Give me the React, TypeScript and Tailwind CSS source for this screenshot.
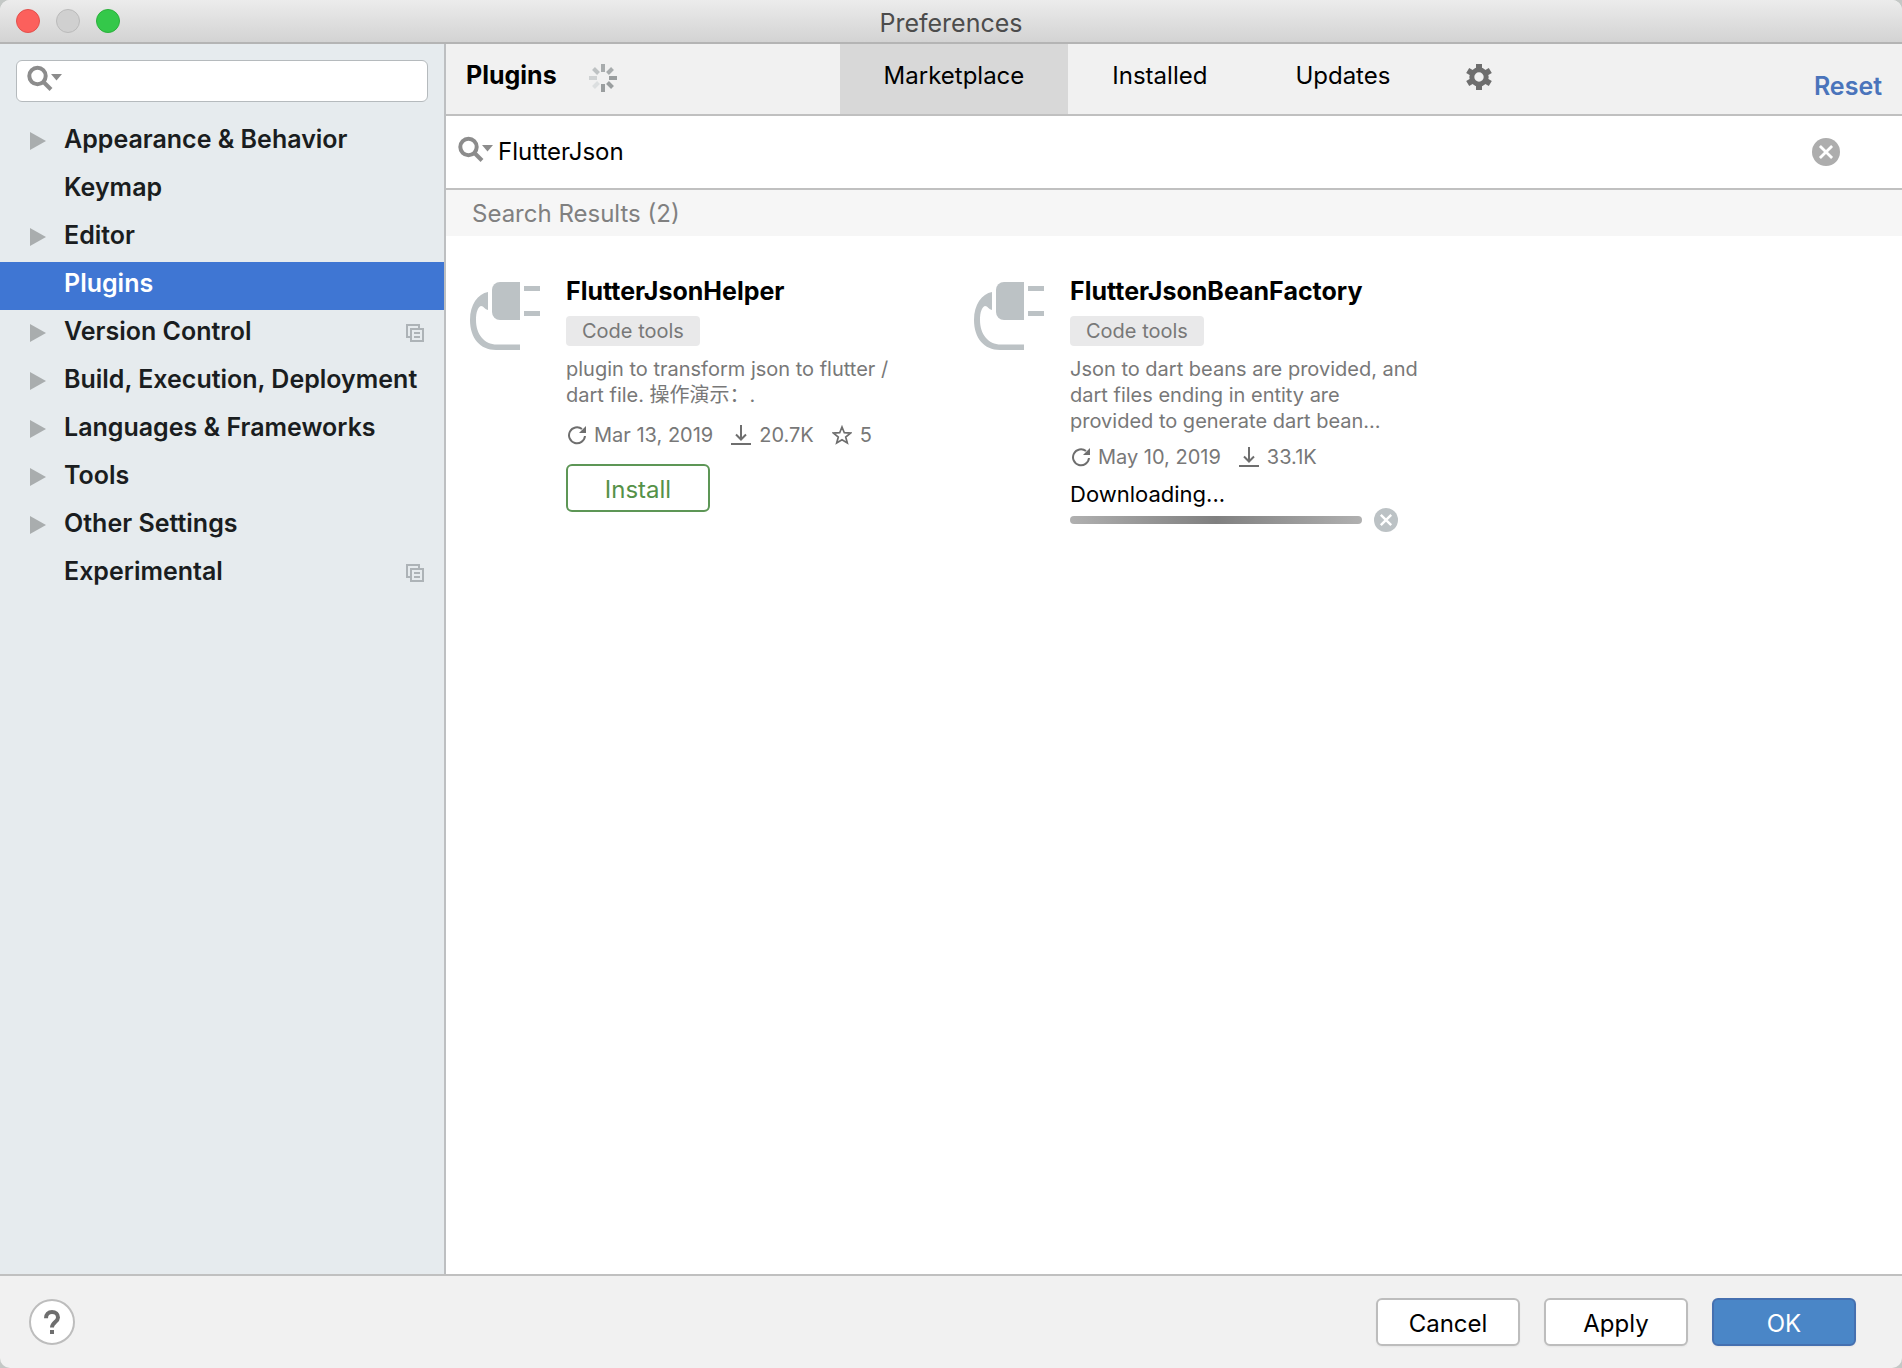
import { useState } from "react"
import type React from "react"

interface Category {
  name: string
  expandable?: boolean
  projectLevel?: boolean
}

interface Plugin {
  name: string
  tag: string
  description: string
  updated: string
  downloads: string
  rating?: string
  downloading?: boolean
}

const categories: Category[] = [
  { name: "Appearance & Behavior", expandable: true },
  { name: "Keymap" },
  { name: "Editor", expandable: true },
  { name: "Plugins" },
  { name: "Version Control", expandable: true, projectLevel: true },
  { name: "Build, Execution, Deployment", expandable: true },
  { name: "Languages & Frameworks", expandable: true },
  { name: "Tools", expandable: true },
  { name: "Other Settings", expandable: true },
  { name: "Experimental", projectLevel: true },
]

const tabs = ["Marketplace", "Installed", "Updates"]

const plugins: Plugin[] = [
  {
    name: "FlutterJsonHelper",
    tag: "Code tools",
    description: "plugin to transform json to flutter / dart file. 操作演示：.",
    updated: "Mar 13, 2019",
    downloads: "20.7K",
    rating: "5",
  },
  {
    name: "FlutterJsonBeanFactory",
    tag: "Code tools",
    description: "Json to dart beans are provided, and dart files ending in entity are provided to generate dart bean...",
    updated: "May 10, 2019",
    downloads: "33.1K",
    downloading: true,
  },
]

export default function App() {
  const [selected, setSelected] = useState("Plugins")
  const [tab, setTab] = useState("Marketplace")
  const [filter, setFilter] = useState("")
  const [query, setQuery] = useState("FlutterJson")

  return (
    <div className="min-h-screen bg-[#c4c8c6] font-['Inter','Noto_Sans_CJK_SC',sans-serif] text-2xl text-black">
      <div className="flex min-h-screen flex-col overflow-hidden rounded-[10px] bg-[#f1f1f1]">
        <header className="grid h-11 shrink-0 grid-cols-[1fr_auto_1fr] items-center border-b-2 border-[#b4b4b4] bg-linear-to-b from-[#ececec] to-[#d3d3d3] px-4">
          <div className="flex gap-4">
            <button aria-label="Close" className="size-6 rounded-full border border-[#e2504c] bg-[#fc605c]" />
            <button aria-label="Minimize" className="size-6 rounded-full border border-[#bababa] bg-[#d0d0d0]" />
            <button aria-label="Zoom" className="size-6 rounded-full border border-[#2bb03c] bg-[#34c84a]" />
          </div>
          <h1 className="pt-1 text-[25px] leading-8 text-[#4c4c4c]">Preferences</h1>
        </header>

        <div className="flex flex-1">
          <aside className="w-[446px] shrink-0 border-r-2 border-[#bdbfc1] bg-[#e6ebee]">
            <div className="px-4 pt-4 pb-4">
              <label className="flex h-[42px] items-start gap-1 rounded-md border border-[#b5babd] bg-white px-2.5 pt-1">
                <SearchIcon />
                <input
                  aria-label="Search settings"
                  value={filter}
                  onChange={(e) => setFilter(e.target.value)}
                  className="min-w-0 flex-1 bg-transparent outline-none"
                />
              </label>
            </div>
            <nav>
              {categories.map((c) => (
                <CategoryRow key={c.name} category={c} active={c.name === selected} onSelect={() => setSelected(c.name)} />
              ))}
            </nav>
          </aside>

          <main className="flex min-w-0 flex-1 flex-col bg-white">
            <div className="grid h-[72px] grid-cols-[1fr_auto_1fr] border-b-2 border-[#c0c0c0] bg-[#f1f1f1]">
              <div className="flex items-start gap-8 pt-4 pl-5">
                <h2 className="text-[25px] leading-[30px] font-bold">Plugins</h2>
                <Spinner />
              </div>
              <div className="flex">
                {tabs.map((t) => (
                  <button
                    key={t}
                    onClick={() => setTab(t)}
                    className={`flex items-start px-11 pt-4 ${t === tab ? "bg-[#d8d8d8]" : ""}`}
                  >
                    {t}
                  </button>
                ))}
                <button aria-label="Plugin settings" className="flex items-start pt-5 pr-4 pl-8">
                  <GearIcon />
                </button>
              </div>
              <div className="flex items-start justify-end pt-[26px] pr-5">
                <a href="#reset" className="text-[25px] leading-8 font-semibold text-[#4a74bb]">
                  Reset
                </a>
              </div>
            </div>

            <div className="flex h-[74px] items-center border-b-2 border-[#c0c0c0] pr-[62px] pl-3">
              <label className="flex flex-1 items-start gap-1">
                <SearchIcon />
                <input
                  aria-label="Search plugins"
                  value={query}
                  onChange={(e) => setQuery(e.target.value)}
                  className="min-w-0 flex-1 bg-transparent leading-8 outline-none"
                />
              </label>
              <button aria-label="Clear search" onClick={() => setQuery("")}>
                <CrossCircle className="size-7 text-[#adadad]" />
              </button>
            </div>

            <div className="flex h-[46px] items-center bg-[#f6f6f6] px-[26px] pt-0.5 text-[#808080]">Search Results (2)</div>

            <div className="flex flex-wrap px-6 pt-10">
              {plugins.map((p) => (
                <PluginCard key={p.name} plugin={p} />
              ))}
            </div>
          </main>
        </div>

        <footer className="flex h-[94px] shrink-0 items-center gap-6 border-t-2 border-[#c0c0c0] pr-[46px] pl-[29px]">
          <button
            aria-label="Help"
            className="mr-auto flex size-[46px] items-center justify-center rounded-full border-2 border-[#bdbdbd] bg-white"
          >
            <svg viewBox="0 0 16 24" className="h-6 w-4" fill="none" stroke="#6e6e6e" strokeWidth="4">
              <path d="M2 8.2C2 4.4 4.4 2 8 2s6 2.400 6 5.400c0 4.400-6 5-6 10.200" />
              <path d="M8 20v4" />
            </svg>
          </button>
          <DialogButton>Cancel</DialogButton>
          <DialogButton>Apply</DialogButton>
          <button className="h-12 w-36 rounded-md border-2 border-[#4570b0] bg-[#4a86c7] pt-1 text-white shadow-xs">
            OK
          </button>
        </footer>
      </div>
    </div>
  )
}

function CategoryRow({ category, active, onSelect }: { category: Category; active: boolean; onSelect: () => void }) {
  return (
    <button
      onClick={onSelect}
      className={`flex h-12 w-full items-center pr-5 pb-0.5 pl-[30px] text-left text-[25px] leading-8 font-semibold ${
        active ? "bg-[#3f76d3] text-white" : "text-[#1a1d20]"
      }`}
    >
      <span className="w-[34px] shrink-0">
        {category.expandable && (
          <svg viewBox="0 0 16 18" className="h-[18px] w-4" fill="#a9adae">
            <path d="M0 0l16 9-16 9z" />
          </svg>
        )}
      </span>
      <span className="flex-1 pb-1 whitespace-nowrap">{category.name}</span>
      {category.projectLevel && (
        <svg viewBox="0 0 18 18" className="size-[18px]" fill="none" stroke="#adb3b7" strokeWidth="2">
          <path d="M4 13H1V1h12v3M5 5h12v12H5zM8 9h6M8 13h6" />
        </svg>
      )}
    </button>
  )
}

function PluginCard({ plugin }: { plugin: Plugin }) {
  return (
    <article className="flex w-[504px] items-start gap-6 pr-13">
      <PlugIcon />
      <div className="flex min-w-0 flex-1 flex-col items-start">
        <h3 className="text-[25px] leading-[30px] font-bold">{plugin.name}</h3>
        <span className="mt-2.5 rounded-sm bg-[#e9e9ea] px-4 text-xl leading-[30px] text-[#787878]">{plugin.tag}</span>
        <p className="mt-2.5 min-h-14 text-xl leading-[26px] text-[#787878]">{plugin.description}</p>
        <div className="mt-[11px] flex items-center gap-[18px] text-xl leading-6 text-[#787878]">
          <span className="flex items-center gap-2">
            <svg viewBox="0 0 20 20" className="size-5" fill="none" stroke="#6e6e6e" strokeWidth="2">
              <path d="M19 11a8 8 0 1 1-3-7" />
              <path d="M20 1v7h-7z" fill="#6e6e6e" stroke="none" />
            </svg>
            {plugin.updated}
          </span>
          <span className="flex items-center gap-2">
            <svg viewBox="0 0 20 20" className="size-5" fill="none" stroke="#6e6e6e" strokeWidth="2">
              <path d="M10 0v14M5 9.500l5 5 5-5M0 19h20" />
            </svg>
            {plugin.downloads}
          </span>
          {plugin.rating && (
            <span className="flex items-center gap-2">
              <svg viewBox="0 0 20 20" className="size-5" fill="none" stroke="#6e6e6e" strokeWidth="1.700">
                <path d="M10 2l2.300 5.700 6.200.4-4.800 3.900 1.600 6L10 14.700 4.700 18l1.600-6-4.800-3.900 6.200-.4z" />
              </svg>
              {plugin.rating}
            </span>
          )}
        </div>
        {plugin.downloading ? (
          <>
            <p className="mt-[11px] text-[22px] leading-7">Downloading...</p>
            <div className="flex items-center gap-3">
              <div
                role="progressbar"
                aria-label="Downloading"
                className="h-2 w-[292px] rounded-full bg-linear-to-r from-[#b0b0b0] via-[#808080] to-[#b0b0b0]"
              />
              <button aria-label="Cancel download">
                <CrossCircle className="size-6 text-[#bcc2c5]" />
              </button>
            </div>
          </>
        ) : (
          <button className="mt-[17px] h-12 w-36 rounded-md border-2 border-[#5d9656] pt-1 text-[#559148]">Install</button>
        )}
      </div>
    </article>
  )
}

function DialogButton({ children }: { children: React.ReactNode }) {
  return <button className="h-12 w-36 rounded-md border-2 border-[#bdbdbd] bg-white pt-1 shadow-xs">{children}</button>
}

function SearchIcon() {
  return (
    <svg viewBox="0 0 36 26" className="h-[26px] w-9 shrink-0" fill="none">
      <circle cx="10.500" cy="11" r="8.200" stroke="#8c8c8c" strokeWidth="4" />
      <path d="M16 16.500l8 8" stroke="#8c8c8c" strokeWidth="4" />
      <path d="M24 9h11l-5.500 6.500z" fill="#8c8c8c" />
    </svg>
  )
}

function CrossCircle({ className }: { className: string }) {
  return (
    <svg viewBox="0 0 24 24" className={className}>
      <circle cx="12" cy="12" r="12" fill="currentColor" />
      <path d="M6.800 6.800l10.400 10.400M17.200 6.800L6.800 17.200" stroke="#fff" strokeWidth="2.400" />
    </svg>
  )
}

function Spinner() {
  return (
    <svg viewBox="0 0 28 28" className="mt-1 size-7" strokeWidth="4">
      <path d="M14 0v8" stroke="#a8acad" />
      <path d="M23.500 4.500l-5 5" stroke="#a8acad" />
      <path d="M28 14h-8" stroke="#9a9e9f" />
      <path d="M23.500 23.500l-5-5" stroke="#9a9e9f" />
      <path d="M14 28v-8" stroke="#9a9e9f" />
      <path d="M4.500 23.500l5-5" stroke="#dcdfe0" />
      <path d="M0 14h8" stroke="#cfd2d3" />
      <path d="M4.500 4.500l5 5" stroke="#bec2c3" />
    </svg>
  )
}

function GearIcon() {
  return (
    <svg viewBox="0 0 26 26" className="size-[26px]" fill="none" stroke="#6e6e6e">
      <circle cx="13" cy="13" r="7.200" strokeWidth="5" />
      <path d="M13 0v5M13 21v5M1.700 6.500L6 9M20 17l4.300 2.500M1.700 19.500L6 17M20 9l4.300-2.500" strokeWidth="6" />
    </svg>
  )
}

function PlugIcon() {
  return (
    <svg viewBox="0 0 72 72" className="mt-1 size-[72px] shrink-0" fill="#bcc2c5">
      <path d="M30 2h20v38H30a8 8 0 0 1-8-8V10a8 8 0 0 1 8-8z" />
      <path d="M54 6h16v5H54zM54 31h16v5H54z" />
      <path d="M18 12v18c-4-1-4-4-7-4-3 1-5 6-5 14 0 14 8 24.500 21 24.500h23V70H26C10 70 0 58 0 40 0 24 8 14 18 12z" />
    </svg>
  )
}
